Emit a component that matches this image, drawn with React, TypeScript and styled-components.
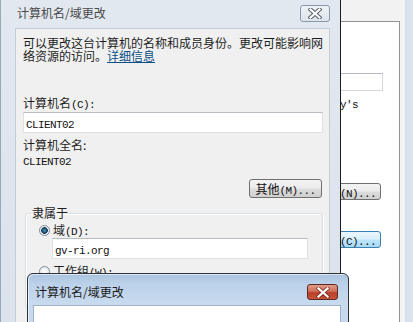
import React from 'react';
import styled, { createGlobalStyle, css } from 'styled-components';

const GlobalStyle = createGlobalStyle`
  html, body {
    margin: 0;
    padding: 0;
  }
  body {
    width: 413px;
    height: 322px;
    overflow: hidden;
    background: #dfe7ef;
    font-family: "Noto Sans CJK SC", "Liberation Sans", sans-serif;
    font-size: 12px;
    color: #1e1e1e;
  }
`;

const Desktop = styled.div`
  position: relative;
  width: 413px;
  height: 322px;
  overflow: hidden;
  background: #dfe7ef;
`;

/* latin bits in the dialogs come out in a narrow fixed-width face;
   line-height 0 keeps them from stretching the cjk line boxes */
const Mono = styled.span`
  font-family: "Liberation Mono", "DejaVu Sans Mono", monospace;
  font-size: 11px;
  letter-spacing: -0.6px;
  line-height: 0;
  color: #111;
`;

/* ---------- window behind (system properties) ---------- */

const BackWindow = styled.div`
  position: absolute;
  left: 100px;
  top: -10px;
  width: 320px;
  height: 360px;
  box-sizing: border-box;
  padding: 10px 15px 0 10px;
  background: linear-gradient(to right, #cfdbe8, #c6d5e5 92%, #e6edf5);
  display: flex;
  flex-direction: column;
`;

const BackBody = styled.div`
  flex: 1;
  background: #f2f2f2;
  padding: 21px 5px 0 0;
  display: flex;
  flex-direction: column;
`;

const TabPage = styled.div`
  flex: 1;
  background: #fff;
  border: 1px solid #8e9196;
  border-bottom: none;
  display: flex;
  flex-direction: column;
  align-items: flex-end;
`;

const DescBox = styled.div`
  margin: 51px 16px 0 0;
  width: 200px;
  height: 18px;
  box-sizing: border-box;
  border: 1px solid #d3d6db;
  border-top-color: #b5b9c0;
`;

const HintText = styled.div`
  margin: 6px 41px 0 0;
  line-height: 12px;
  white-space: nowrap;
  text-align: right;
`;

const Button = styled.button<{ $hot?: boolean }>`
  box-sizing: border-box;
  padding: 0 6px;
  border: 1px solid #707070;
  border-radius: 3px;
  background: linear-gradient(#f3f3f3 0%, #ebebeb 48%, #dddddd 52%, #cfcfcf 100%);
  font-family: "Noto Sans CJK SC", "Liberation Sans", sans-serif;
  font-size: 12px;
  line-height: 12px;
  color: #111;
  white-space: nowrap;
  ${p =>
    p.$hot &&
    css`
      border-color: #3c7fb1;
      background: linear-gradient(#eaf6fd 0%, #d9f0fc 48%, #bee6fd 52%, #a7d9f5 100%);
    `}
`;

const BackButton = styled(Button)<{ $gap: number }>`
  margin: ${p => p.$gap}px 18px 0 0;
  width: 90px;
  height: 17px;
  text-align: right;
  padding-right: 4px;
`;

/* ---------- main dialog (inactive) ---------- */

const MainWindow = styled.div`
  position: absolute;
  left: 0;
  top: 0;
  width: 341px;
  height: 360px;
  box-sizing: border-box;
  border: 1px solid #1c1c1c;
  border-top: none;
  border-left-color: #9aa7b6;
  padding: 0 10px 0 14px;
  background: linear-gradient(#e2e8ef, #dae2ec);
  display: flex;
  flex-direction: column;
`;

const TitleBar = styled.div<{ $height: number }>`
  height: ${p => p.$height}px;
  flex-shrink: 0;
  display: flex;
  justify-content: space-between;
  align-items: flex-start;
`;

const TitleText = styled.span<{ $top: number; $active?: boolean }>`
  margin-top: ${p => p.$top}px;
  padding-left: 2px;
  line-height: 14px;
  font-size: 12px;
  color: ${p => (p.$active ? '#1a1a1a' : '#4a4a4a')};
  white-space: nowrap;
`;

const CloseButton = styled.div<{ $active?: boolean }>`
  box-sizing: border-box;
  display: flex;
  align-items: center;
  justify-content: center;
  border-radius: 3px;
  ${p =>
    p.$active
      ? css`
          margin: 10px 3px 0 0;
          width: 31px;
          height: 16px;
          border: 1px solid #5e2a22;
          background: linear-gradient(#e09a88 0%, #cf6f58 45%, #b9402a 55%, #c5533a 100%);
        `
      : css`
          margin: 5px 0 0 0;
          width: 30px;
          height: 17px;
          border: 1px solid #8d99a8;
          background: linear-gradient(#eef2f6, #dde4ec);
        `}
`;

const MainPanel = styled.div`
  flex: 1;
  background: #f0f0f0;
  border: 1px solid #c3cdd8;
  padding: 7px 6px 0 7px;
  display: flex;
  flex-direction: column;
`;

const Line = styled.div<{ $gap?: number; $tall?: boolean }>`
  margin-top: ${p => p.$gap ?? 0}px;
  line-height: ${p => (p.$tall ? 13 : 12)}px;
  white-space: nowrap;
`;

const Link = styled.a`
  color: #0b4f86;
  text-decoration: underline;
`;

const TextBox = styled.div<{ $gap: number; $indent?: number; $width?: number }>`
  margin: ${p => p.$gap}px 0 0 ${p => p.$indent ?? 0}px;
  width: ${p => (p.$width ? `${p.$width}px` : 'auto')};
  height: 21px;
  box-sizing: border-box;
  border: 1px solid #dde1e6;
  border-top-color: #b7bcc3;
  background: #fff;
  padding-left: 2px;
  line-height: 19px;
`;

const OtherButton = styled(Button)`
  align-self: flex-end;
  margin: 13px 1px 0 0;
  width: 73px;
  height: 19px;
  padding: 0;
`;

const GroupBox = styled.fieldset`
  margin: 9px 0 0 2px;
  padding: 0 0 30px 0;
  min-width: 0;
  border: 1px solid #d5dfe5;
  border-radius: 3px;
  box-shadow: inset 1px 1px 0 #fff, 1px 1px 0 #fff;
`;

const GroupLegend = styled.legend`
  margin-left: 5px;
  padding: 0 1px;
  line-height: 12px;
  color: #1e1e1e;
`;

const RadioRow = styled.div<{ $gap: number }>`
  margin-top: ${p => p.$gap}px;
  height: 12px;
  padding-left: 13px;
  display: flex;
  align-items: center;
  gap: 3px;
  line-height: 12px;
`;

const Radio = styled.span<{ $checked?: boolean }>`
  width: 11px;
  height: 11px;
  box-sizing: border-box;
  border-radius: 50%;
  border: 1px solid #7d8a96;
  background: radial-gradient(circle, #ffffff 0, #e7ebef 70%);
  ${p =>
    p.$checked &&
    css`
      background: radial-gradient(circle, #4f9bc7 0, #1b5278 2.2px, #0d2f48 3px, #e3e9ef 3.6px, #ffffff 5px);
    `}
`;

/* ---------- front dialog (active) ---------- */

const FrontWindow = styled.div`
  position: absolute;
  left: 27px;
  top: 273px;
  width: 322px;
  height: 80px;
  box-sizing: border-box;
  border: 1px solid #2e3338;
  border-radius: 6px 6px 0 0;
  padding: 0 7px 0 5px;
  background: linear-gradient(#a9c3de 0px, #bcd2ea 10px, #c8daee 30px, #c4d7ec 100%);
  box-shadow: inset 1px 1px 0 rgba(255, 255, 255, 0.6);
  display: flex;
  flex-direction: column;
`;

const FrontBody = styled.div`
  flex: 1;
  background: #fff;
  border: 1px solid #9fb2c7;
  border-bottom: none;
`;

function CloseGlyph({ active }: { active?: boolean }) {
  return (
    <svg width="14" height="11" viewBox="0 0 14 11">
      <path
        d="M2.5 1.5 L11.5 9.5 M11.5 1.5 L2.5 9.5"
        stroke={active ? '#5a1c12' : '#3d4753'}
        strokeWidth="4.2"
        strokeLinecap="square"
        opacity={active ? 0.55 : 0.85}
      />
      <path
        d="M2.5 1.5 L11.5 9.5 M11.5 1.5 L2.5 9.5"
        stroke="#ffffff"
        strokeWidth="2.2"
        strokeLinecap="square"
      />
    </svg>
  );
}

export default function App() {
  return (
    <Desktop>
      <GlobalStyle />

      <BackWindow>
        <BackBody>
          <TabPage>
            <DescBox />
            <HintText>
              <Mono>例如: "Kitchen Computer" 或 "Mary's</Mono>
            </HintText>
            <BackButton $gap={74}>
              网络 <Mono>ID(N)...</Mono>
            </BackButton>
            <BackButton $gap={31} $hot>
              更改<Mono>(C)...</Mono>
            </BackButton>
          </TabPage>
        </BackBody>
      </BackWindow>

      <MainWindow>
        <TitleBar $height={28}>
          <TitleText $top={6}>计算机名/域更改</TitleText>
          <CloseButton>
            <CloseGlyph />
          </CloseButton>
        </TitleBar>
        <MainPanel>
          <Line $tall>可以更改这台计算机的名称和成员身份。更改可能影响网</Line>
          <Line $tall>
            络资源的访问。<Link>详细信息</Link>
          </Line>

          <Line $gap={35}>
            计算机名<Mono>(C):</Mono>
          </Line>
          <TextBox $gap={3}>
            <Mono>CLIENT02</Mono>
          </TextBox>

          <Line $gap={6}>计算机全名:</Line>
          <Line $gap={3}>
            <Mono>CLIENT02</Mono>
          </Line>

          <OtherButton>
            其他<Mono>(M)...</Mono>
          </OtherButton>

          <GroupBox>
            <GroupLegend>隶属于</GroupLegend>
            <RadioRow $gap={5}>
              <Radio $checked />
              <span>
                域<Mono>(D):</Mono>
              </span>
            </RadioRow>
            <TextBox $gap={2} $indent={26} $width={256}>
              <Mono>gv-ri.org</Mono>
            </TextBox>
            <RadioRow $gap={6}>
              <Radio />
              <span>
                工作组<Mono>(W):</Mono>
              </span>
            </RadioRow>
          </GroupBox>
        </MainPanel>
      </MainWindow>

      <FrontWindow>
        <TitleBar $height={31}>
          <TitleText $top={11} $active>
            计算机名/域更改
          </TitleText>
          <CloseButton $active>
            <CloseGlyph active />
          </CloseButton>
        </TitleBar>
        <FrontBody />
      </FrontWindow>
    </Desktop>
  );
}
